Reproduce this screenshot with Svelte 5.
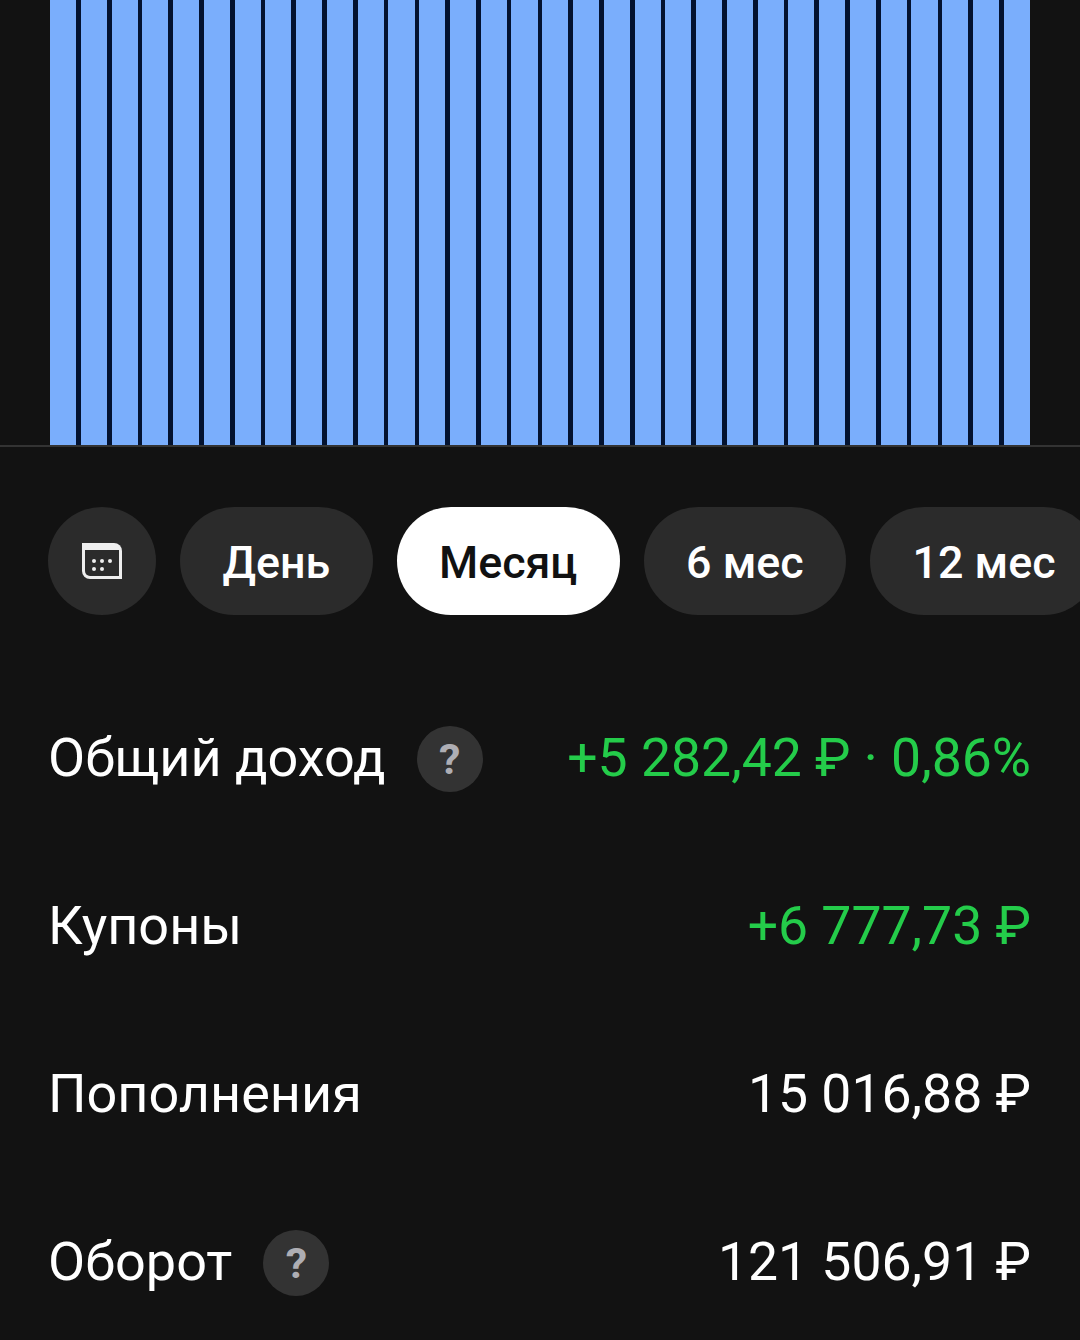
<script lang="ts">
  const bars = Array.from({ length: 32 }, (_, i) => i);
  const periods = ["День", "Месяц", "6 мес", "12 мес"];
  const rows = [
    { label: "Общий доход", value: "+5 282,42 ₽ · 0,86%", hint: true, green: true },
    { label: "Купоны", value: "+6 777,73 ₽", hint: false, green: true },
    { label: "Пополнения", value: "15 016,88 ₽", hint: false, green: false },
    { label: "Оборот", value: "121 506,91 ₽", hint: true, green: false },
  ];
</script>

<div class="page">
  <div class="chart">
    <div class="bars">
      {#each bars as bar (bar)}
        <div class="bar"></div>
      {/each}
    </div>
  </div>

  <div class="chips">
    <button class="chip icon" aria-label="Календарь">
      <svg width="42" height="38" viewBox="0 0 42 38">
        <path fill="#eeeeee" d="M1 1h32a8 8 0 0 1 8 8v28H9a8 8 0 0 1-8-8z" />
        <path fill="#2b2b2b" d="M4 8h34v26H9a5 5 0 0 1-5-5z" />
        <g fill="#eeeeee">
          <circle cx="13" cy="19" r="2" />
          <circle cx="21" cy="19" r="2" />
          <circle cx="29" cy="19" r="2" />
          <circle cx="13" cy="27" r="2" />
          <circle cx="21" cy="27" r="2" />
        </g>
      </svg>
    </button>
    {#each periods as period}
      <button class="chip" class:active={period === "Месяц"}>{period}</button>
    {/each}
  </div>

  <div class="rows">
    {#each rows as row}
      <div class="row">
        <span class="label">{row.label}</span>
        {#if row.hint}
          <span class="hint">?</span>
        {/if}
        <span class="value" class:green={row.green}>{row.value}</span>
      </div>
    {/each}
  </div>
</div>

<style>
  :global(body) {
    background: #121212;
    overflow: hidden;
  }

  .page {
    width: 1080px;
    height: 1340px;
    overflow: hidden;
    background: #121212;
    font-family: Roboto, "Noto Sans", sans-serif;
    color: #fff;
  }

  .chart {
    height: 447px;
    box-sizing: border-box;
    padding: 0 50px;
    border-bottom: 2px solid #333;
  }

  .bars {
    height: 100%;
    display: flex;
    gap: 4.7px;
    background: #031230;
  }

  .bar {
    flex: 1;
    background: #7aaefc;
  }

  .chips {
    display: flex;
    gap: 24px;
    padding: 60px 0 0 48px;
  }

  .chip {
    height: 108px;
    flex-shrink: 0;
    padding: 2px 42.4px 0;
    border: 0;
    border-radius: 54px;
    background: #2b2b2b;
    color: #fff;
    font: 500 44.8px Roboto, sans-serif;
  }

  .chip.icon {
    width: 108px;
    padding: 0;
    display: flex;
    align-items: center;
    justify-content: center;
  }

  .chip.active {
    background: #fff;
    color: #111;
  }

  .rows {
    padding: 60px 49px 0 48px;
  }

  .row {
    height: 168px;
    display: flex;
    align-items: center;
    font-size: 54px;
  }

  .label,
  .value {
    margin-bottom: 4px;
  }

  .hint {
    width: 66px;
    height: 66px;
    margin-left: 31px;
    border-radius: 50%;
    background: #333;
    color: #aeaeb4;
    font-size: 43px;
    font-weight: 700;
    display: flex;
    align-items: center;
    justify-content: center;
  }

  .value {
    margin-left: auto;
    font-size: 53.5px;
  }

  .green {
    color: #24cc4a;
  }
</style>
